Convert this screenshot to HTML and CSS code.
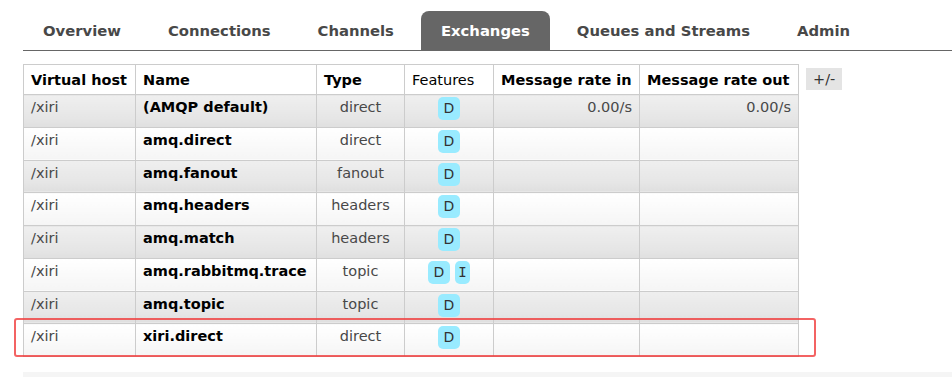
FILE: index.html
```html
<!DOCTYPE html>
<html>
<head>
<meta charset="utf-8">
<link rel="stylesheet" href="styles.css">
</head>
<body>
<nav class="menu">
  <ul class="tabs">
    <li class="tab">Overview</li>
    <li class="tab">Connections</li>
    <li class="tab">Channels</li>
    <li class="tab active">Exchanges</li>
    <li class="tab">Queues and Streams</li>
    <li class="tab">Admin</li>
  </ul>
</nav>
<main class="content">
  <div class="table-wrap">
    <table class="list">
      <colgroup>
        <col class="c-vhost"><col class="c-name"><col class="c-type"><col class="c-feat"><col class="c-in"><col class="c-out">
      </colgroup>
      <thead>
        <tr>
          <th>Virtual host</th>
          <th>Name</th>
          <th>Type</th>
          <th class="plain">Features</th>
          <th>Message rate in</th>
          <th>Message rate out</th>
        </tr>
      </thead>
      <tbody>
        <tr class="alt1"><td class="vhost">/xiri</td><td class="name">(AMQP default)</td><td class="type">direct</td><td class="feat"><span class="badge">D</span></td><td class="rate">0.00/s</td><td class="rate">0.00/s</td></tr>
        <tr class="alt2"><td class="vhost">/xiri</td><td class="name">amq.direct</td><td class="type">direct</td><td class="feat"><span class="badge">D</span></td><td class="rate"></td><td class="rate"></td></tr>
        <tr class="alt1"><td class="vhost">/xiri</td><td class="name">amq.fanout</td><td class="type">fanout</td><td class="feat"><span class="badge">D</span></td><td class="rate"></td><td class="rate"></td></tr>
        <tr class="alt2"><td class="vhost">/xiri</td><td class="name">amq.headers</td><td class="type">headers</td><td class="feat"><span class="badge">D</span></td><td class="rate"></td><td class="rate"></td></tr>
        <tr class="alt1"><td class="vhost">/xiri</td><td class="name">amq.match</td><td class="type">headers</td><td class="feat"><span class="badge">D</span></td><td class="rate"></td><td class="rate"></td></tr>
        <tr class="alt2"><td class="vhost">/xiri</td><td class="name">amq.rabbitmq.trace</td><td class="type">topic</td><td class="feat"><span class="badge">D</span><span class="badge badge-serif">I</span></td><td class="rate"></td><td class="rate"></td></tr>
        <tr class="alt1"><td class="vhost">/xiri</td><td class="name">amq.topic</td><td class="type">topic</td><td class="feat"><span class="badge">D</span></td><td class="rate"></td><td class="rate"></td></tr>
        <tr class="alt2 marked"><td class="vhost">/xiri</td><td class="name">xiri.direct</td><td class="type">direct</td><td class="feat"><span class="badge">D</span></td><td class="rate"></td><td class="rate"></td></tr>
      </tbody>
    </table>
    <span class="toggle">+/-</span>
    <div class="highlight"></div>
  </div>
  <div class="footer-bar"></div>
</main>
</body>
</html>
```

FILE: styles.css
```css
html, body {
  margin: 0;
  padding: 0;
  background: #fff;
}
body {
  font-family: "DejaVu Sans", Verdana, sans-serif;
  font-size: 14.5px;
  color: #484848;
  overflow: hidden;
}
.menu {
  padding-top: 11px;
  margin-left: 23px;
  border-bottom: 1px solid #666;
}
.tabs {
  display: flex;
  gap: 7px;
  margin: 0;
  padding: 0;
  list-style: none;
}
.tab {
  padding: 0 20px;
  height: 39px;
  line-height: 40px;
  font-weight: bold;
  font-size: 14.8px;
  color: #484848;
  border-radius: 8px 8px 0 0;
}
.tab.active {
  background: #666;
  color: #fff;
}
.content {
  padding-left: 23px;
  padding-top: 13px;
}
.table-wrap {
  position: relative;
  display: flex;
  align-items: flex-start;
  gap: 7px;
}
.list {
  border-collapse: collapse;
  table-layout: fixed;
  width: 776px;
  border: 1px solid #ccc;
}
.c-vhost { width: 112px; }
.c-name { width: 181px; }
.c-type { width: 88px; }
.c-feat { width: 89px; }
.c-in { width: 146px; }
.c-out { width: 159px; }
.list th,
.list td {
  border: 1px solid #ccc;
  padding: 0 7px;
  white-space: nowrap;
  overflow: hidden;
}
.list th {
  height: 29px;
  text-align: left;
  font-weight: bold;
  color: #000;
  background: #fff;
  vertical-align: middle;
  padding-left: 7px;
}
.list th.plain {
  font-weight: normal;
}
.list tbody tr {
  height: 32.75px;
}
.list td {
  vertical-align: top;
  padding-top: 4px;
}
.alt1 td {
  background: linear-gradient(to bottom, #efefef, #e6e6e6 70%, #dfdfdf);
}
.alt2 td {
  background: linear-gradient(to bottom, #ffffff, #f9f9f9 60%, #f5f5f5);
}
.vhost { color: #484848; }
.name { font-weight: bold; color: #000; }
.type { text-align: center; color: #484848; }
.rate { text-align: right; color: #484848; }
.list td.feat {
  text-align: center;
  padding-top: 2px;
  font-size: 0;
}
.badge {
  display: inline-block;
  font-size: 14px;
  line-height: 23px;
  height: 23px;
  padding: 0 5.5px;
  background: #99ebff;
  color: #333;
  border-radius: 5px;
  margin: 0 2.5px;
}
.badge-serif {
  font-family: "DejaVu Sans Mono", monospace;
  padding: 0 3.5px;
}
.toggle {
  margin-top: 4px;
  padding: 0 7px;
  height: 22px;
  line-height: 22px;
  background: #e4e4e4;
  color: #333;
  font-size: 14.5px;
}
.highlight {
  position: absolute;
  left: -9px;
  top: 254px;
  width: 798px;
  height: 35px;
  border: 2px solid rgba(240, 60, 60, 0.8);
  border-radius: 3px;
  pointer-events: none;
}
.footer-bar {
  margin-top: 15px;
  height: 10px;
  background: #f5f5f5;
}
```
